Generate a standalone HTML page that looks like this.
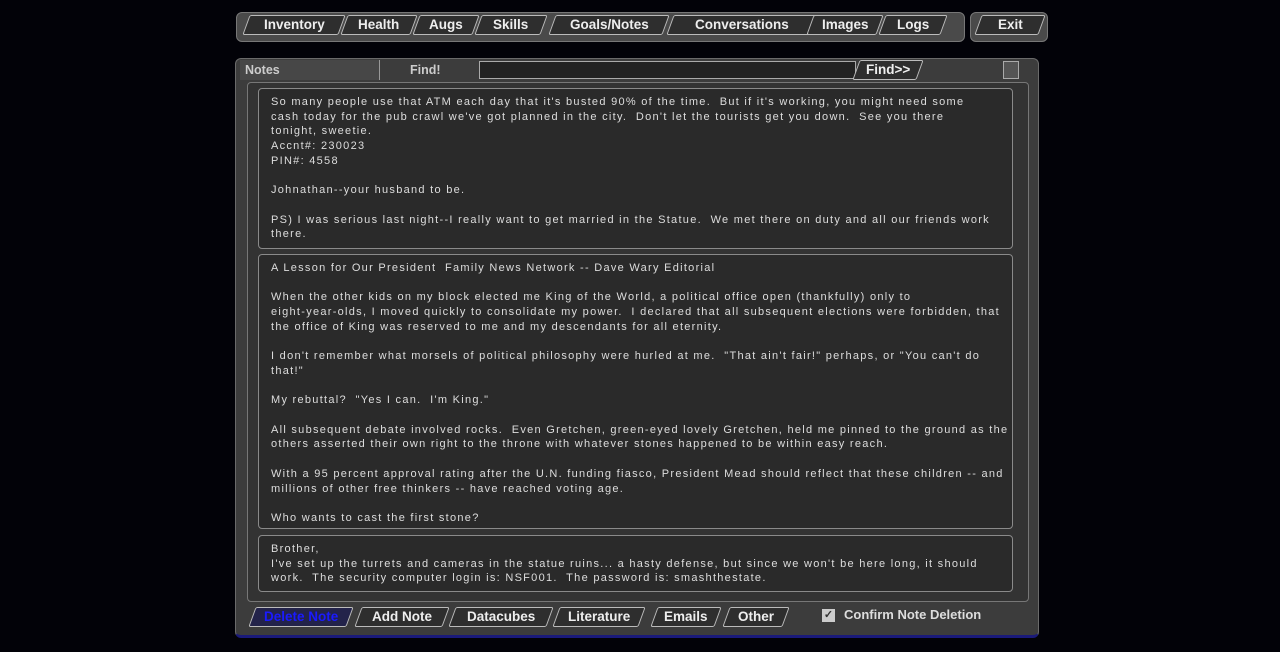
<html><head><style>
body{margin:0;width:1280px;height:652px;background:#020208;overflow:hidden;position:relative;font-family:"Liberation Sans",sans-serif}
.a{position:absolute}
.bar{background:#4a4a4a;border:1px solid #777;border-radius:6px}
.tab{position:absolute;top:3px;height:18px;border:1px solid #bbb;background:#2e2e2e;color:#eee;font-weight:bold;font-size:13.5px;line-height:18px;text-align:center;transform:skewX(-20deg);border-radius:2px}
.tab span{display:inline-block;transform:skewX(20deg)}
.box{position:absolute;left:258px;width:755px;background:#2a2a2a;border:1px solid #8a8a8a;border-radius:4px;color:#ddd;font-size:11px;letter-spacing:1.28px;line-height:14.7px;white-space:pre;padding:6px 0 0 12px;box-sizing:border-box;overflow:hidden}
</style></head><body>
<div class="a bar" style="left:236px;top:12px;width:727px;height:28px"></div>
<div class="a bar" style="left:970px;top:12px;width:76px;height:28px"></div>
<div class="a" style="left:236px;top:12px;width:0;height:0">
<div class="tab" style="left:10px;width:94px"><span>Inventory</span></div>
<div class="tab" style="left:108px;width:68px"><span>Health</span></div>
<div class="tab" style="left:180px;width:58px"><span>Augs</span></div>
<div class="tab" style="left:242px;width:64px"><span>Skills</span></div>
<div class="tab" style="left:316px;width:112px"><span>Goals/Notes</span></div>
<div class="tab" style="left:434px;width:142px"><span>Conversations</span></div>
<div class="tab" style="left:574px;width:68px"><span>Images</span></div>
<div class="tab" style="left:646px;width:60px"><span>Logs</span></div>
<div class="tab" style="left:742px;width:62px"><span>Exit</span></div>
</div>
<div class="a" style="left:235px;top:58px;width:802px;height:576px;background:#3c3c3c;border:1px solid #6a6a6a;border-radius:6px;border-bottom:3px solid #1a1a7a"></div>
<div class="a" style="left:240px;top:60px;width:140px;height:20px;background:#474747;border-right:1px solid #999;color:#ccc;font-weight:bold;font-size:12.5px;line-height:20px;padding-left:5px;box-sizing:border-box">Notes</div>
<div class="a" style="left:410px;top:63px;color:#ccc;font-weight:bold;font-size:12.5px">Find!</div>
<div class="a" style="left:479px;top:61px;width:375px;height:16px;background:#222;border:1px solid #aaa"></div>
<div class="a" style="left:852px;top:59px;width:0"><div class="tab" style="left:4px;width:62px;top:1px"><span>Find&gt;&gt;</span></div></div>
<div class="a" style="left:1003px;top:61px;width:14px;height:16px;border:1px solid #aaa;background:#555"></div>
<div class="a" style="left:247px;top:82px;width:780px;height:518px;background:#333;border:1px solid #777;border-radius:4px"></div>
<div class="box" style="top:88px;height:161px">So many people use that ATM each day that it's busted 90% of the time.  But if it's working, you might need some
cash today for the pub crawl we've got planned in the city.  Don't let the tourists get you down.  See you there
tonight, sweetie.
Accnt#: 230023
PIN#: 4558

Johnathan--your husband to be.

PS) I was serious last night--I really want to get married in the Statue.  We met there on duty and all our friends work
there.</div>
<div class="box" style="top:254px;height:275px">A Lesson for Our President  Family News Network -- Dave Wary Editorial

When the other kids on my block elected me King of the World, a political office open (thankfully) only to
eight-year-olds, I moved quickly to consolidate my power.  I declared that all subsequent elections were forbidden, that
the office of King was reserved to me and my descendants for all eternity.

I don't remember what morsels of political philosophy were hurled at me.  "That ain't fair!" perhaps, or "You can't do
that!"

My rebuttal?  "Yes I can.  I'm King."

All subsequent debate involved rocks.  Even Gretchen, green-eyed lovely Gretchen, held me pinned to the ground as the
others asserted their own right to the throne with whatever stones happened to be within easy reach.

With a 95 percent approval rating after the U.N. funding fiasco, President Mead should reflect that these children -- and
millions of other free thinkers -- have reached voting age.

Who wants to cast the first stone?</div>
<div class="box" style="top:535px;height:57px">Brother,
I've set up the turrets and cameras in the statue ruins... a hasty defense, but since we won't be here long, it should
work.  The security computer login is: NSF001.  The password is: smashthestate.</div>
<div class="a" style="left:240px;top:604px;width:0">
<div class="tab" style="left:12px;width:96px;color:#1a1aff;background:#23234a"><span>Delete Note</span></div>
<div class="tab" style="left:118px;width:86px"><span>Add Note</span></div>
<div class="tab" style="left:212px;width:96px"><span>Datacubes</span></div>
<div class="tab" style="left:316px;width:84px"><span>Literature</span></div>
<div class="tab" style="left:414px;width:62px"><span>Emails</span></div>
<div class="tab" style="left:486px;width:58px"><span>Other</span></div>
</div>
<div class="a" style="left:822px;top:609px;width:13px;height:13px;background:#ccc;color:#333;font-size:11px;line-height:13px;text-align:center;font-weight:bold">✓</div>
<div class="a" style="left:844px;top:607px;color:#ddd;font-weight:bold;font-size:13px">Confirm Note Deletion</div>
</body></html>
